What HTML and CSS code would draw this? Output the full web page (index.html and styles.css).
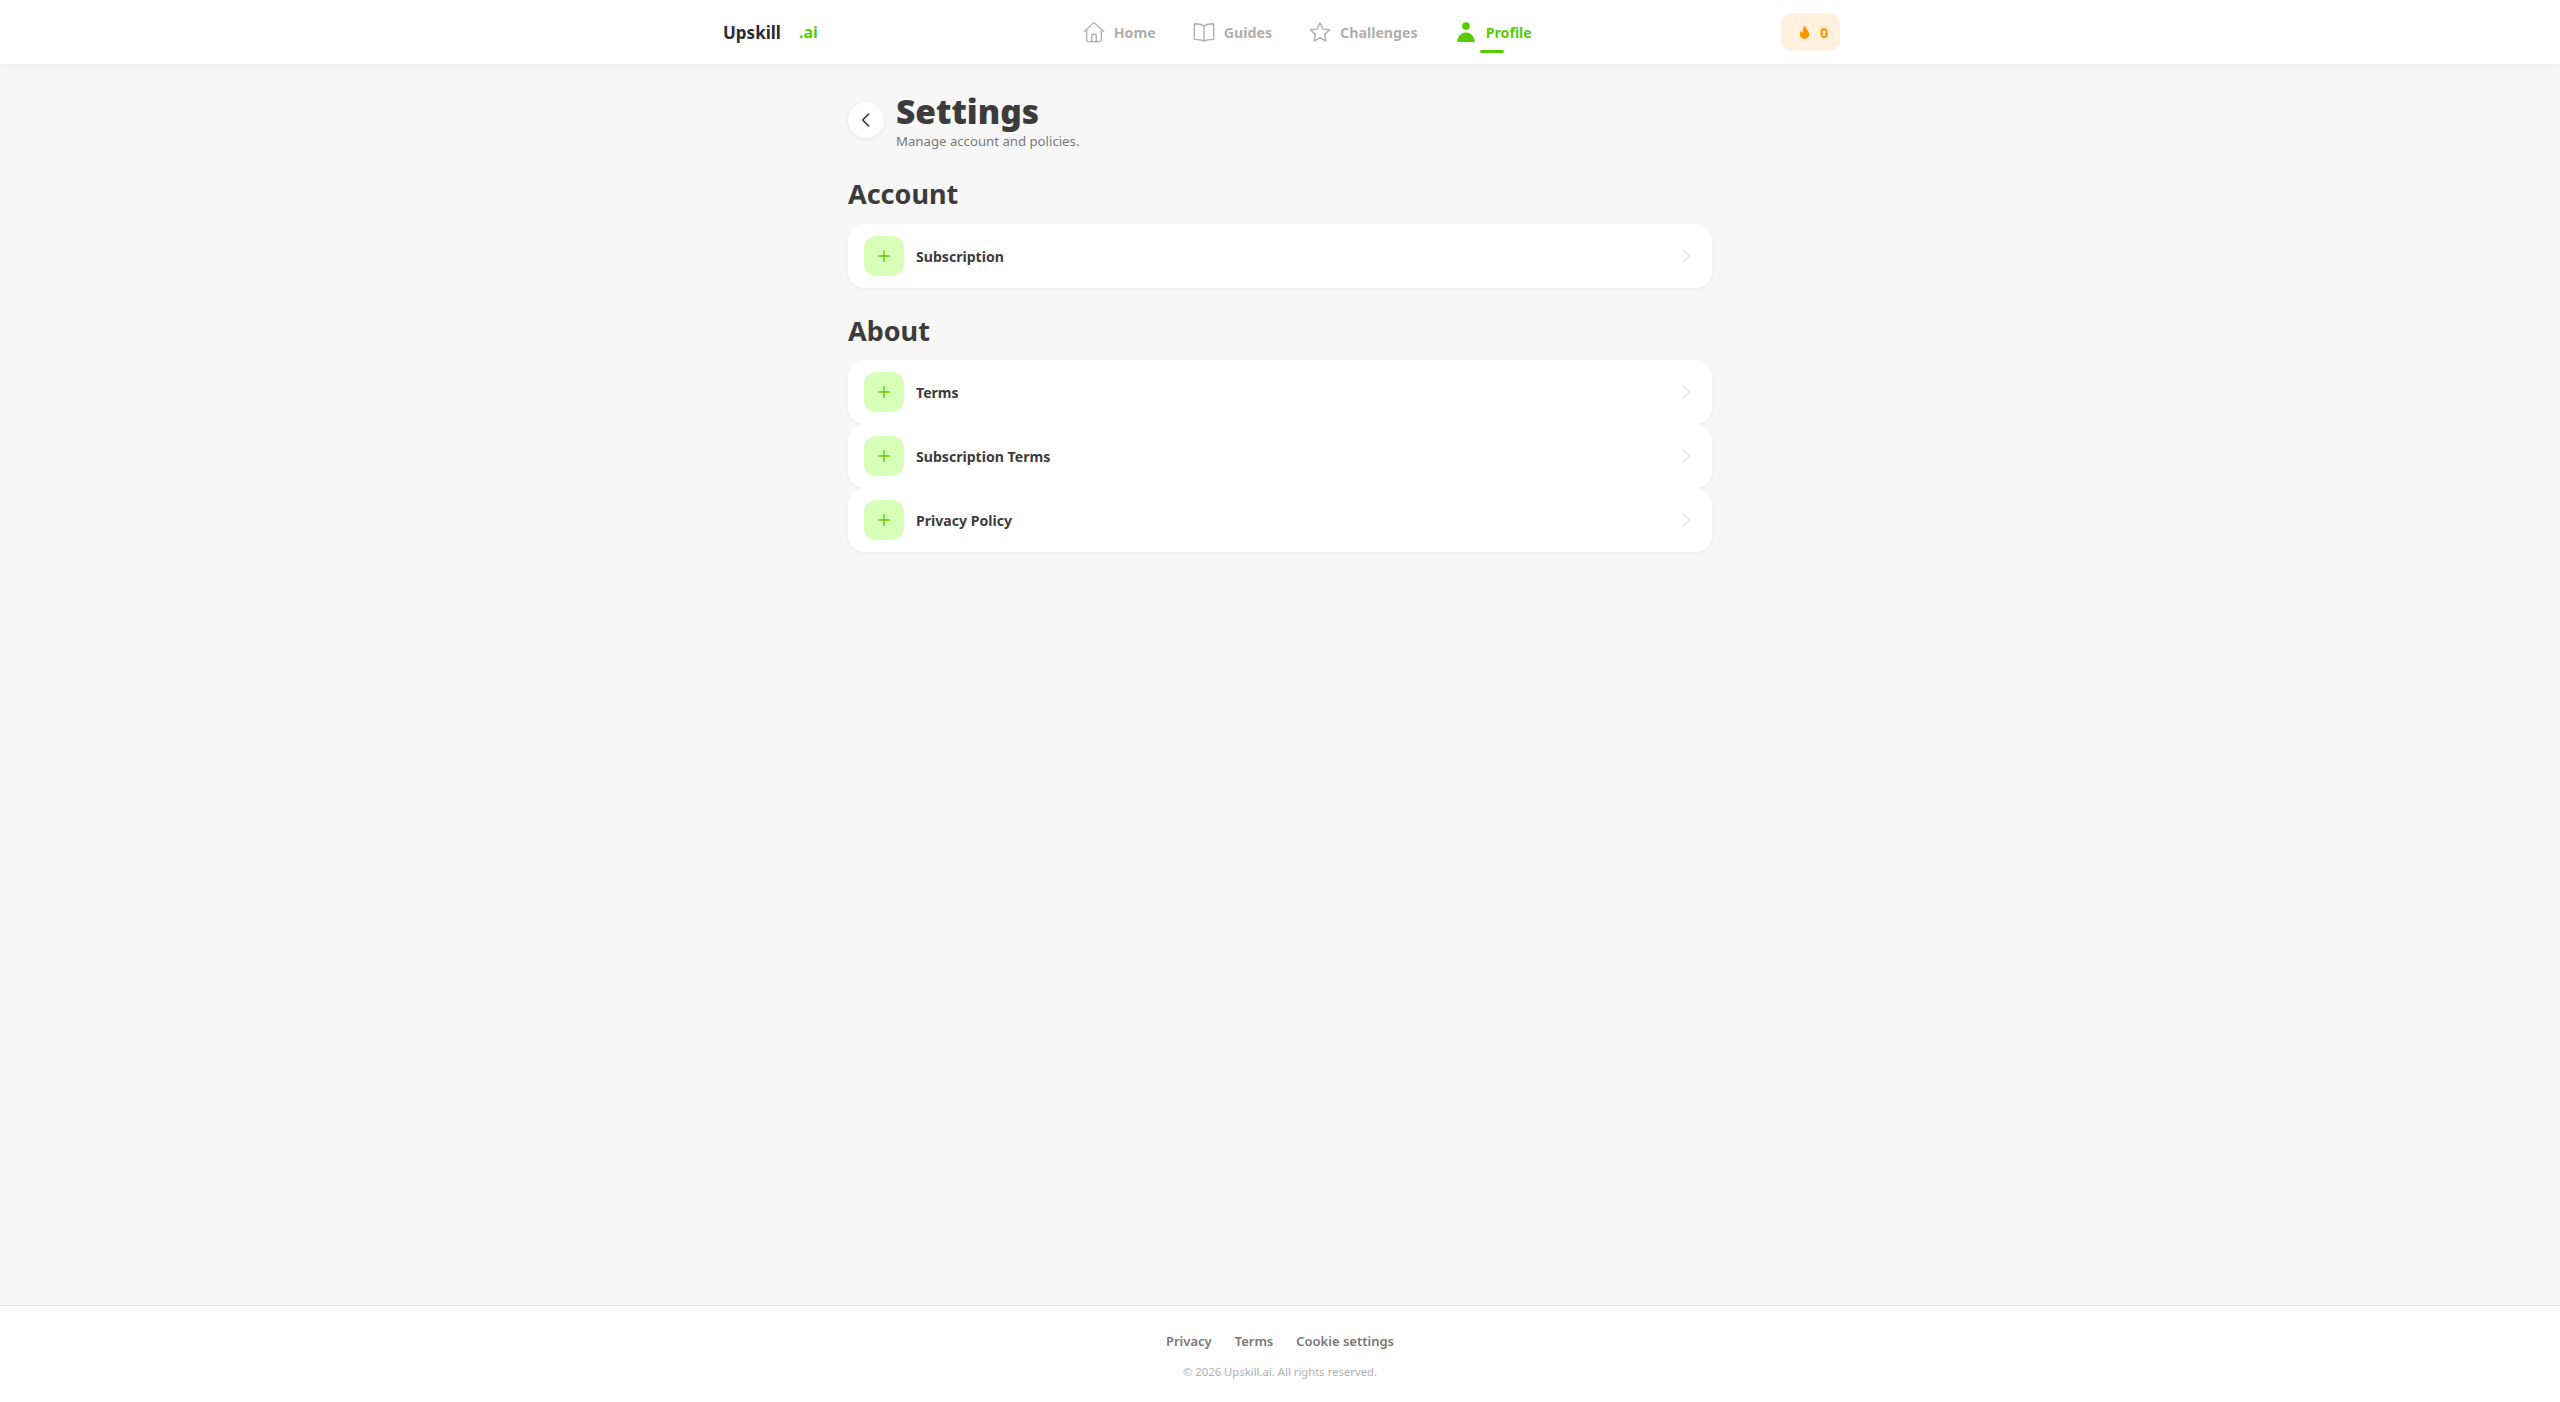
FILE: index.html
```html
<!DOCTYPE html>
<html lang="en">
<head>
<meta charset="utf-8">
<title>Settings - Upskill.ai</title>
<link rel="stylesheet" href="styles.css">
</head>
<body>
<header class="topbar">
  <div class="topbar-inner">
    <a class="logo"><span class="logo-name">Upskill</span><span class="logo-ai">.ai</span></a>
    <nav class="nav">
      <a class="nav-item">
        <svg class="nav-icon" viewBox="0 0 24 24" fill="none" stroke="currentColor" stroke-width="1.5" stroke-linejoin="round" stroke-linecap="round"><path d="M1.5 11.5 12 1.5l10.5 10M4 9.5V21a1.5 1.5 0 0 0 1.5 1.500h13A1.500 1.500 0 0 0 20 21V9.500"/><path d="M9.500 22.500V16a1.500 1.500 0 0 1 1.500-1.500h2a1.500 1.500 0 0 1 1.500 1.500v6.500"/></svg>
        Home
      </a>
      <a class="nav-item">
        <svg class="nav-icon" viewBox="0 0 24 24" fill="none" stroke="currentColor" stroke-width="1.500" stroke-linejoin="round" stroke-linecap="round"><path d="M12 5.500C10 3.800 6 3 1.500 3v17c4.500 0 8.500.8 10.500 2 2-1.200 6-2 10.500-2V3C18 3 14 3.800 12 5.500ZM12 5.500V22"/></svg>
        Guides
      </a>
      <a class="nav-item">
        <svg class="nav-icon" viewBox="0 0 24 24" fill="none" stroke="currentColor" stroke-width="1.500" stroke-linejoin="round"><path d="m12 2 3.100 6.800 7.400.8-5.500 5 1.500 7.300L12 18.200l-6.500 3.700L7 14.600l-5.500-5 7.400-.8L12 2Z"/></svg>
        Challenges
      </a>
      <a class="nav-item nav-active">
        <svg class="nav-icon" viewBox="0 0 24 24" fill="currentColor"><circle cx="12" cy="5.500" r="4.200"/><path d="M3.500 23c-.8 0-1.200-.5-1-1.300C3.500 16 7 12.500 12 12.500s8.500 3.500 9.500 9.200c.2.800-.2 1.300-1 1.300h-17Z"/></svg>
        Profile
        <span class="nav-underline"></span>
      </a>
    </nav>
    <div class="streak">
      <svg class="streak-icon" viewBox="0 0 14 16"><path fill="#ff9600" d="M7.500.5c.4 2.300 1.500 3.400 2.800 5 .9 1.100 1.700 2.300 1.700 4.200 0 3.200-2.200 5.300-5 5.300s-5-2.100-5-5c0-1.700.8-3 1.800-4 .2 1 .6 1.700 1.300 2.100C5 5.300 5.600 2.700 7.500.5Z"/></svg>
      <span>0</span>
    </div>
  </div>
</header>

<main class="main">
  <div class="page-head">
    <button class="back">
      <svg viewBox="0 0 24 24" width="20" height="20" fill="none" stroke="#3c3c3c" stroke-width="2" stroke-linecap="round" stroke-linejoin="round"><path d="m15 5-7 7 7 7"/></svg>
    </button>
    <div class="page-titles">
      <h1 class="title">Settings</h1>
      <p class="subtitle">Manage account and policies.</p>
    </div>
  </div>

  <h2 class="section-title">Account</h2>
  <div class="rows">
    <a class="row"><span class="row-icon"><svg viewBox="0 0 14 14"><path d="M7 1v12M1 7h12"/></svg></span><span class="row-label">Subscription</span><svg class="chev" viewBox="0 0 10 16"><path d="m1.500 1.500 7 6.500-7 6.500"/></svg></a>
  </div>

  <h2 class="section-title section-about">About</h2>
  <div class="rows">
    <a class="row"><span class="row-icon"><svg viewBox="0 0 14 14"><path d="M7 1v12M1 7h12"/></svg></span><span class="row-label">Terms</span><svg class="chev" viewBox="0 0 10 16"><path d="m1.500 1.500 7 6.500-7 6.500"/></svg></a>
    <a class="row"><span class="row-icon"><svg viewBox="0 0 14 14"><path d="M7 1v12M1 7h12"/></svg></span><span class="row-label">Subscription Terms</span><svg class="chev" viewBox="0 0 10 16"><path d="m1.500 1.500 7 6.500-7 6.500"/></svg></a>
    <a class="row"><span class="row-icon"><svg viewBox="0 0 14 14"><path d="M7 1v12M1 7h12"/></svg></span><span class="row-label">Privacy Policy</span><svg class="chev" viewBox="0 0 10 16"><path d="m1.500 1.500 7 6.500-7 6.500"/></svg></a>
  </div>
</main>

<footer class="footer">
  <div class="footer-links"><a>Privacy</a><a>Terms</a><a>Cookie settings</a></div>
  <p class="copyright">© 2026 Upskill.ai. All rights reserved.</p>
</footer>
</body>
</html>
```

FILE: styles.css
```css
* { box-sizing: border-box; }
html, body { margin: 0; padding: 0; height: 100%; }
body {
  display: flex;
  flex-direction: column;
  min-height: 1402px;
  background: #f7f7f7;
  color: #3c3c3c;
  font-family: "Noto Sans", "Open Sans", sans-serif;
}
.topbar {
  height: 64px;
  background: #fff;
  box-shadow: 0 1px 4px rgba(0, 0, 0, 0.05);
  flex: none;
}
.topbar-inner {
  width: 1120px;
  height: 100%;
  margin: 0 auto;
  display: flex;
  align-items: center;
}
.logo {
  display: flex;
  gap: 18px;
  font-size: 17px;
  font-weight: 700;
  margin-left: 3px;
  color: #2b2b33;
}
.logo-ai { color: #58cc02; font-size: 16px; }
.nav {
  display: flex;
  align-items: center;
  gap: 37px;
  margin-left: 265px;
}
.nav-item {
  position: relative;
  display: flex;
  align-items: center;
  gap: 9px;
  font-size: 14.200px;
  font-weight: 700;
  color: #afafaf;
}
.nav-icon { width: 22px; height: 22px; }
.nav-active { color: #58cc02; }
.nav-underline {
  position: absolute;
  left: 25px;
  bottom: -10px;
  width: 24px;
  height: 3px;
  border-radius: 2px;
  background: #58cc02;
}
.streak {
  margin-left: auto;
  width: 59px;
  height: 38px;
  border-radius: 12px;
  background: #fff1dd;
  color: #ff9600;
  display: flex;
  align-items: center;
  padding-left: 17px;
  gap: 9px;
  font-size: 14.500px;
  font-weight: 700;
}
.streak-icon { width: 13px; height: 15px; }
.main {
  width: 864px;
  margin: 0 auto;
  flex: 1;
  padding-top: 29px;
}
.page-head {
  display: flex;
  align-items: flex-start;
  gap: 12px;
}
.back {
  width: 36px;
  height: 36px;
  padding: 0;
  border: 0;
  border-radius: 50%;
  background: #fff;
  box-shadow: 0 1px 4px rgba(0, 0, 0, 0.08);
  display: flex;
  align-items: center;
  justify-content: center;
  margin-top: 9px;
}
.page-titles { display: flex; flex-direction: column; }
.title {
  margin: 0;
  font-size: 33.500px;
  line-height: 36px;
  font-weight: 900;
  color: #3c3c3c;
}
.subtitle {
  margin: 3px 0 0;
  font-size: 13.200px;
  line-height: 18px;
  color: #777;
}
.section-title {
  margin: 26px 0 12px;
  font-size: 27px;
  line-height: 36px;
  font-weight: 700;
  color: #3c3c3c;
}
.section-about { margin: 25px 0 11px; }
.rows { display: flex; flex-direction: column; }
.row {
  height: 64px;
  display: flex;
  align-items: center;
  padding: 0 16px;
  background: #fff;
  border-radius: 16px;
  box-shadow: 0 1px 3px rgba(0, 0, 0, 0.05);
}
.row-icon {
  width: 40px;
  height: 40px;
  border-radius: 12px;
  background: #d7ffb8;
  display: flex;
  align-items: center;
  justify-content: center;
}
.row-icon svg {
  width: 12px;
  height: 12px;
  fill: none;
  stroke: #58cc02;
  stroke-width: 1.600;
  stroke-linecap: round;
}
.row-label {
  margin-left: 12px;
  font-size: 14.100px;
  font-weight: 700;
  color: #3c3c3c;
}
.chev {
  margin-left: auto;
  margin-right: 5px;
  width: 9px;
  height: 14px;
  fill: none;
  stroke: #e5e5e5;
  stroke-width: 1.800;
  stroke-linecap: round;
  stroke-linejoin: round;
}
.footer {
  flex: none;
  height: 97px;
  background: #fff;
  border-top: 1px solid #e5e5e5;
  display: flex;
  flex-direction: column;
  align-items: center;
  padding-top: 26px;
}
.footer-links {
  display: flex;
  gap: 23px;
  font-size: 13px;
  line-height: 18px;
  font-weight: 600;
  color: #777;
}
.copyright {
  margin: 14px 0 0;
  font-size: 11.300px;
  line-height: 16px;
  color: #afafaf;
}
```
